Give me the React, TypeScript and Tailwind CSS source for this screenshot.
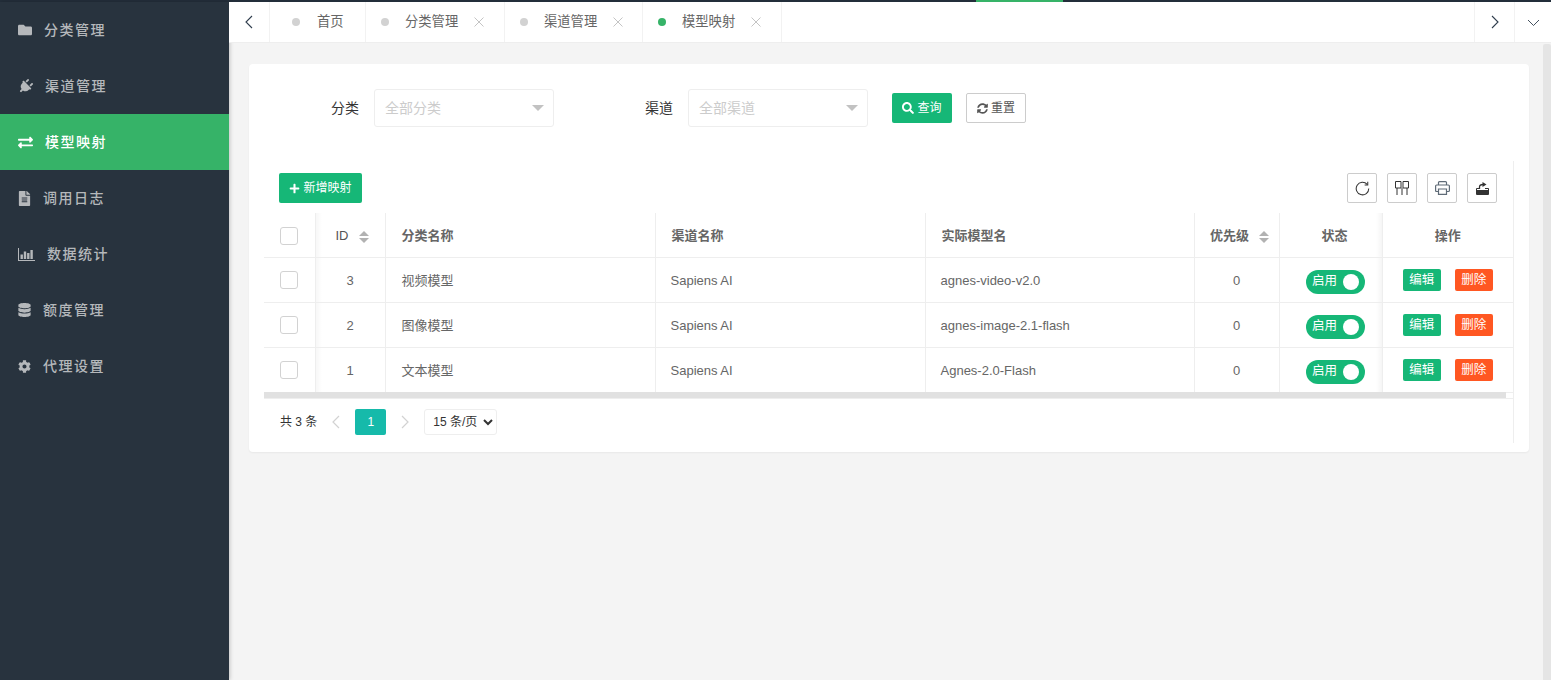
import React from "react";
import {
	FaCog,
	FaDatabase,
	FaExchangeAlt,
	FaFileAlt,
	FaFolder,
	FaPlug,
	FaPlus,
	FaSearch,
	FaSyncAlt,
} from "react-icons/fa";

const font = "font-['Liberation_Sans','Noto_Sans_CJK_SC',sans-serif]";

// soft shadow the fixed columns throw on their neighbours
const shadeLeft = "bg-[linear-gradient(90deg,rgba(0,0,0,0.03),transparent)] bg-[length:6px_100%] bg-no-repeat";
const shadeRight = "bg-[linear-gradient(270deg,rgba(0,0,0,0.04),transparent)] bg-[length:6px_100%] bg-no-repeat bg-right";

function BarChartIcon({ className }: { className?: string }) {
	return (
		<svg viewBox="0 0 17 13" className={className} fill="currentColor">
			<path d="M0 0h1v12h16v1H0z" />
			<path d="M2.5 6.5h2.4V11H2.500zM5.800 3.500h2.400V11H5.800zM9.100 5h2.400v6H9.100zM12.400 2h2.400v9h-2.400z" />
		</svg>
	);
}

const menu = [
	{ label: "分类管理", icon: <FaFolder className="w-[14px] h-[14px]" /> },
	{ label: "渠道管理", icon: <FaPlug className="w-[15px] h-[15px] rotate-45" /> },
	{ label: "模型映射", icon: <FaExchangeAlt className="w-[15px] h-[15px]" />, active: true },
	{ label: "调用日志", icon: <FaFileAlt className="w-[13px] h-[15px]" /> },
	{ label: "数据统计", icon: <BarChartIcon className="w-[17px] h-[13px]" /> },
	{ label: "额度管理", icon: <FaDatabase className="w-[13px] h-[14px]" /> },
	{ label: "代理设置", icon: <FaCog className="w-[13px] h-[13px]" /> },
];

const tabs = [
	{ label: "首页", w: "w-[96px]", pad: "pl-[22px]", gap: "mr-[17px]", closable: false },
	{ label: "分类管理", w: "w-[139px]", pad: "pl-[15px]", gap: "mr-[16px]", closable: true },
	{ label: "渠道管理", w: "w-[138px]", pad: "pl-[15px]", gap: "mr-[16px]", closable: true },
	{ label: "模型映射", w: "w-[139px]", pad: "pl-[15px]", gap: "mr-[16px]", closable: true, active: true },
];

const rows = [
	{ id: 3, cat: "视频模型", model: "agnes-video-v2.0" },
	{ id: 2, cat: "图像模型", model: "agnes-image-2.1-flash" },
	{ id: 1, cat: "文本模型", model: "Agnes-2.0-Flash" },
];

function Chevron({ dir }: { dir: "left" | "right" | "down" }) {
	const d =
		dir === "left"
			? "M8 1 2 7l6 6"
			: dir === "right"
				? "M2 1l6 6-6 6"
				: "M1 2l5.500 5.500L12 2";
	const size = dir === "down" ? "w-[13px] h-[9px]" : "w-[10px] h-[14px]";
	const box = dir === "down" ? "0 0 13 9" : "0 0 10 14";
	return (
		<svg viewBox={box} className={size} fill="none" stroke="#2f3d4d" strokeWidth={dir === "down" ? 0.9 : 1.1}>
			<path d={d} />
		</svg>
	);
}

function CloseX() {
	return (
		<svg viewBox="0 0 10 10" className="w-[10px] h-[10px] ml-[16px]" fill="none" stroke="#c4c4c4" strokeWidth="1">
			<path d="M.5.5l9 9M9.500.5l-9 9" />
		</svg>
	);
}

function Sort() {
	return (
		<span className="inline-flex flex-col gap-[2px] ml-[10px] align-middle">
			<span className="w-0 h-0 border-x-[5px] border-x-transparent border-b-[5px] border-b-[#b2b2b2]" />
			<span className="w-0 h-0 border-x-[5px] border-x-transparent border-t-[5px] border-t-[#b2b2b2]" />
		</span>
	);
}

function Check({ className = "" }: { className?: string }) {
	return <span className={`block w-[18px] h-[18px] rounded-[3px] border border-[#d2d2d2] bg-white mx-auto ${className}`} />;
}

function SelectBox({ placeholder }: { placeholder: string }) {
	return (
		<div className="w-[180px] h-[38px] border border-[#eeeeee] rounded-[3px] bg-white flex items-center justify-between pl-[10px] pr-[9px]">
			<span className="text-[14px] text-[#cccccc]">{placeholder}</span>
			<span className="w-0 h-0 border-x-[6px] border-x-transparent border-t-[6px] border-t-[#c2c2c2]" />
		</div>
	);
}

function ToolBtn({ children }: { children: React.ReactNode }) {
	return (
		<div className="w-[30px] h-[30px] border border-[#cccccc] rounded-[2px] flex items-center justify-center bg-white">
			{children}
		</div>
	);
}

function RowCell({ children, className = "" }: { children: React.ReactNode; className?: string }) {
	return (
		<td className={`h-[45px] p-0 border-b border-r border-[#eeeeee] text-[13px] text-[#666666] ${className}`}>
			{children}
		</td>
	);
}

function HeadCell({ children, className = "" }: { children: React.ReactNode; className?: string }) {
	return (
		<th className={`h-[44px] p-0 border-b border-r border-[#eeeeee] text-[13px] font-bold text-[#666666] ${className}`}>
			{children}
		</th>
	);
}

export default function App() {
	return (
		<div className={`${font} w-[1551px] h-[680px] overflow-hidden bg-[#f4f4f4] flex flex-col`}>
			{/* top line */}
			<div className="h-[2px] shrink-0 bg-[#232e3a] flex">
				<div className="w-[87px] h-[2px] ml-[976px] bg-[#36b368]" />
			</div>

			<div className="flex-1 flex min-h-0">
				{/* sidebar */}
				<aside className="w-[229px] shrink-0 bg-[#28333e] shadow-[1px_0_4px_rgba(0,0,0,0.2)]">
					{menu.map((m) => (
						<div
							key={m.label}
							className={`h-[56px] pl-[18px] flex items-center gap-[12px] text-[14px] font-medium tracking-[1.5px] ${
								m.active ? "bg-[#36b368] text-white" : "text-[#b5b8bb]"
							}`}
						>
							{m.icon}
							<span>{m.label}</span>
						</div>
					))}
				</aside>

				<main className="flex-1 min-w-0 flex flex-col">
					{/* tabs */}
					<div className="h-[41px] shrink-0 bg-white border-b border-[#eeeeee] flex">
						<div className="w-[41px] border-r border-[#f2f2f2] flex items-center justify-center">
							<Chevron dir="left" />
						</div>
						{tabs.map((t) => (
							<div key={t.label} className={`${t.w} ${t.pad} border-r border-[#f2f2f2] flex items-center`}>
								<span className={`w-[8px] h-[8px] rounded-full ${t.gap} ${t.active ? "bg-[#36b368]" : "bg-[#d2d2d2]"}`} />
								<span className="text-[13.3px] text-[#666666]">{t.label}</span>
								{t.closable && <CloseX />}
							</div>
						))}
						<div className="ml-auto w-[40px] border-l border-[#f2f2f2] flex items-center justify-center">
							<Chevron dir="right" />
						</div>
						<div className="w-[37px] border-l border-[#f2f2f2] flex items-center justify-center">
							<Chevron dir="down" />
						</div>
					</div>

					<div className="flex-1 flex min-h-0">
						<div className="flex-1 min-w-0 pt-[21px] pl-[20px] pr-[14px]">
							{/* card */}
							<div className="bg-white rounded-[4px] h-[388px] shadow-[0_1px_2px_rgba(0,0,0,0.05)] pl-[15px] pr-[15px]">
								<div className="h-[97px] flex items-start pt-[25px]">
									<label className="w-[110px] h-[38px] shrink-0 flex items-center justify-end pr-[15px] text-[14px] text-[#333333]">
										分类
									</label>
									<SelectBox placeholder="全部分类" />
									<label className="w-[134px] h-[38px] shrink-0 flex items-center justify-end pr-[15px] text-[14px] text-[#333333]">
										渠道
									</label>
									<SelectBox placeholder="全部渠道" />
									<div className="h-[38px] ml-[24px] flex items-center gap-[14px]">
										<div className="w-[60px] h-[30px] bg-[#16b777] rounded-[2px] text-white text-[12px] flex items-center justify-center gap-[3px]">
											<FaSearch className="w-[12px] h-[12px]" />
											查询
										</div>
										<div className="w-[60px] h-[30px] border border-[#cccccc] rounded-[2px] bg-white text-[#555555] text-[12px] flex items-center justify-center gap-[3px]">
											<FaSyncAlt className="w-[11px] h-[11px]" />
											重置
										</div>
									</div>
								</div>

								{/* table box */}
								<div className="border-r border-[#eeeeee] h-[282px]">
									<div className="h-[52px] flex items-start justify-between pt-[12px] pl-[15px] pr-[16px]">
										<div className="w-[83px] h-[30px] bg-[#16b777] rounded-[2px] text-white text-[12px] flex items-center justify-center gap-[3px]">
											<FaPlus className="w-[11px] h-[11px]" />
											新增映射
										</div>
										<div className="flex gap-[10px]">
											<ToolBtn>
												<svg viewBox="0 0 16 16" className="w-[15px] h-[15px]" fill="none" stroke="#333" strokeWidth="1.1">
													<path d="M13 3.600A6.700 6.700 0 1 0 14.700 8" />
													<path d="M13.600.9v3.300h-3.300" />
												</svg>
											</ToolBtn>
											<ToolBtn>
												<svg viewBox="0 0 14 14" className="w-[14px] h-[14px]" fill="none" stroke="#333" strokeWidth="1">
													<path d="M.5.5H6v6.500H.5zM8 .5h5.500v6.500H8z" />
													<path d="M2 7v7M7 7v7M12 7v7" />
												</svg>
											</ToolBtn>
											<ToolBtn>
												<svg viewBox="0 0 15 14" className="w-[15px] h-[14px]" fill="none" stroke="#5f6b77" strokeWidth="1.2">
													<path d="M3.500 4V1.600q0-1 1-1h6q1 0 1 1V4" />
													<path d="M3.500 10.500H1.600q-1 0-1-1V5q0-1 1-1h11.800q1 0 1 1v4.500q0 1-1 1h-1.900" />
													<path d="M3.500 8h8v5.400h-8z" />
												</svg>
											</ToolBtn>
											<ToolBtn>
												<svg viewBox="0 0 13 13" className="w-[13px] h-[13px]" fill="#333">
													<path d="M0 8h13v4q0 1-1 1H1q-1 0-1-1z" />
													<path d="M.5 8.500V6.500h3M12.500 8.500V6.500H9" fill="none" stroke="#333" strokeWidth="1" />
													<path d="M3.500 7V5q0-2.500 3.500-2.500" fill="none" stroke="#333" strokeWidth="1.300" />
													<path d="M6.500 0 10.500 2.500 6.500 5z" />
												</svg>
											</ToolBtn>
										</div>
									</div>

									<table className="table-fixed border-collapse w-[1249px]">
										<colgroup>
											<col className="w-[51px]" />
											<col className="w-[70px]" />
											<col className="w-[270px]" />
											<col className="w-[270px]" />
											<col className="w-[269px]" />
											<col className="w-[85px]" />
											<col className="w-[103px]" />
											<col className="w-[131px]" />
										</colgroup>
										<thead>
											<tr>
												<HeadCell>
													<Check className="mt-[2px]" />
												</HeadCell>
												<HeadCell className={`text-center pl-[4px] pt-[2px] ${shadeLeft}`}>
													<span className="font-normal text-[#555555]">ID</span>
													<Sort />
												</HeadCell>
												<HeadCell className="text-left pl-[16px] pt-[2px]">分类名称</HeadCell>
												<HeadCell className="text-left pl-[16px] pt-[2px]">渠道名称</HeadCell>
												<HeadCell className="text-left pl-[16px] pt-[2px]">实际模型名</HeadCell>
												<HeadCell className="text-center pl-[6px] pt-[2px]">
													优先级
													<Sort />
												</HeadCell>
												<HeadCell className={`text-center pl-[8px] pt-[2px] ${shadeRight}`}>状态</HeadCell>
												<HeadCell className="text-center pt-[2px] border-r-0">操作</HeadCell>
											</tr>
										</thead>
										<tbody>
											{rows.map((r) => (
												<tr key={r.id}>
													<RowCell>
														<Check className="mt-[1px]" />
													</RowCell>
													<RowCell className={`text-center pt-[2px] ${shadeLeft}`}>{r.id}</RowCell>
													<RowCell className="pl-[16px] pt-[2px]">{r.cat}</RowCell>
													<RowCell className="pl-[15px] pt-[2px]">Sapiens AI</RowCell>
													<RowCell className="pl-[15px] pt-[2px]">{r.model}</RowCell>
													<RowCell className="text-center pt-[2px]">0</RowCell>
													<RowCell className={`pl-[10px] ${shadeRight}`}>
														<div className="w-[59px] h-[24px] mx-auto mt-[4px] rounded-full bg-[#16b777] flex items-center justify-between pl-[6px] pr-[6px] text-[12.5px] text-white">
															启用
															<span className="w-[16px] h-[16px] rounded-full bg-white" />
														</div>
													</RowCell>
													<RowCell className="border-r-0">
														<div className="flex justify-center gap-[14px]">
															<span className="w-[38px] h-[22px] pt-[2px] rounded-[2px] bg-[#16b777] text-white text-[12.5px] flex items-center justify-center">
																编辑
															</span>
															<span className="w-[38px] h-[22px] pt-[2px] rounded-[2px] bg-[#ff5722] text-white text-[12.5px] flex items-center justify-center">
																删除
															</span>
														</div>
													</RowCell>
												</tr>
											))}
										</tbody>
									</table>

									{/* table scrollbar */}
									<div className="h-[6px] -mt-px border-b border-[#eeeeee] box-content">
										<div className="w-[1242px] h-[6px] bg-[#e1e1e1]" />
									</div>

									<div className="h-[44px] pt-[2px] pl-[16px] flex items-center text-[12px] text-[#333333]">
										<span>共 3 条</span>
										<span className="ml-[15px] w-[9px]">
											<svg viewBox="0 0 8 14" className="w-[8px] h-[14px]" fill="none" stroke="#d2d2d2" strokeWidth="1.2">
												<path d="M7 1 1 7l6 6" />
											</svg>
										</span>
										<span className="ml-[14px] w-[31px] h-[26px] rounded-[2px] bg-[#16baaa] text-white flex items-center justify-center">
											1
										</span>
										<span className="ml-[15px] w-[8px]">
											<svg viewBox="0 0 8 14" className="w-[8px] h-[14px]" fill="none" stroke="#d2d2d2" strokeWidth="1.2">
												<path d="M1 1l6 6-6 6" />
											</svg>
										</span>
										<select className="ml-[15px] w-[73px] h-[26px] pl-[4px] border border-[#eeeeee] rounded-[3px] bg-white text-[12px] text-[#333333]" defaultValue="15">
											<option value="15">15 条/页</option>
										</select>
									</div>
								</div>
							</div>
						</div>
						{/* page scrollbar */}
						<div className="w-[8px] shrink-0 bg-[#e5e5e5] mt-px rounded-t-[2px]" />
					</div>
				</main>
			</div>
		</div>
	);
}
